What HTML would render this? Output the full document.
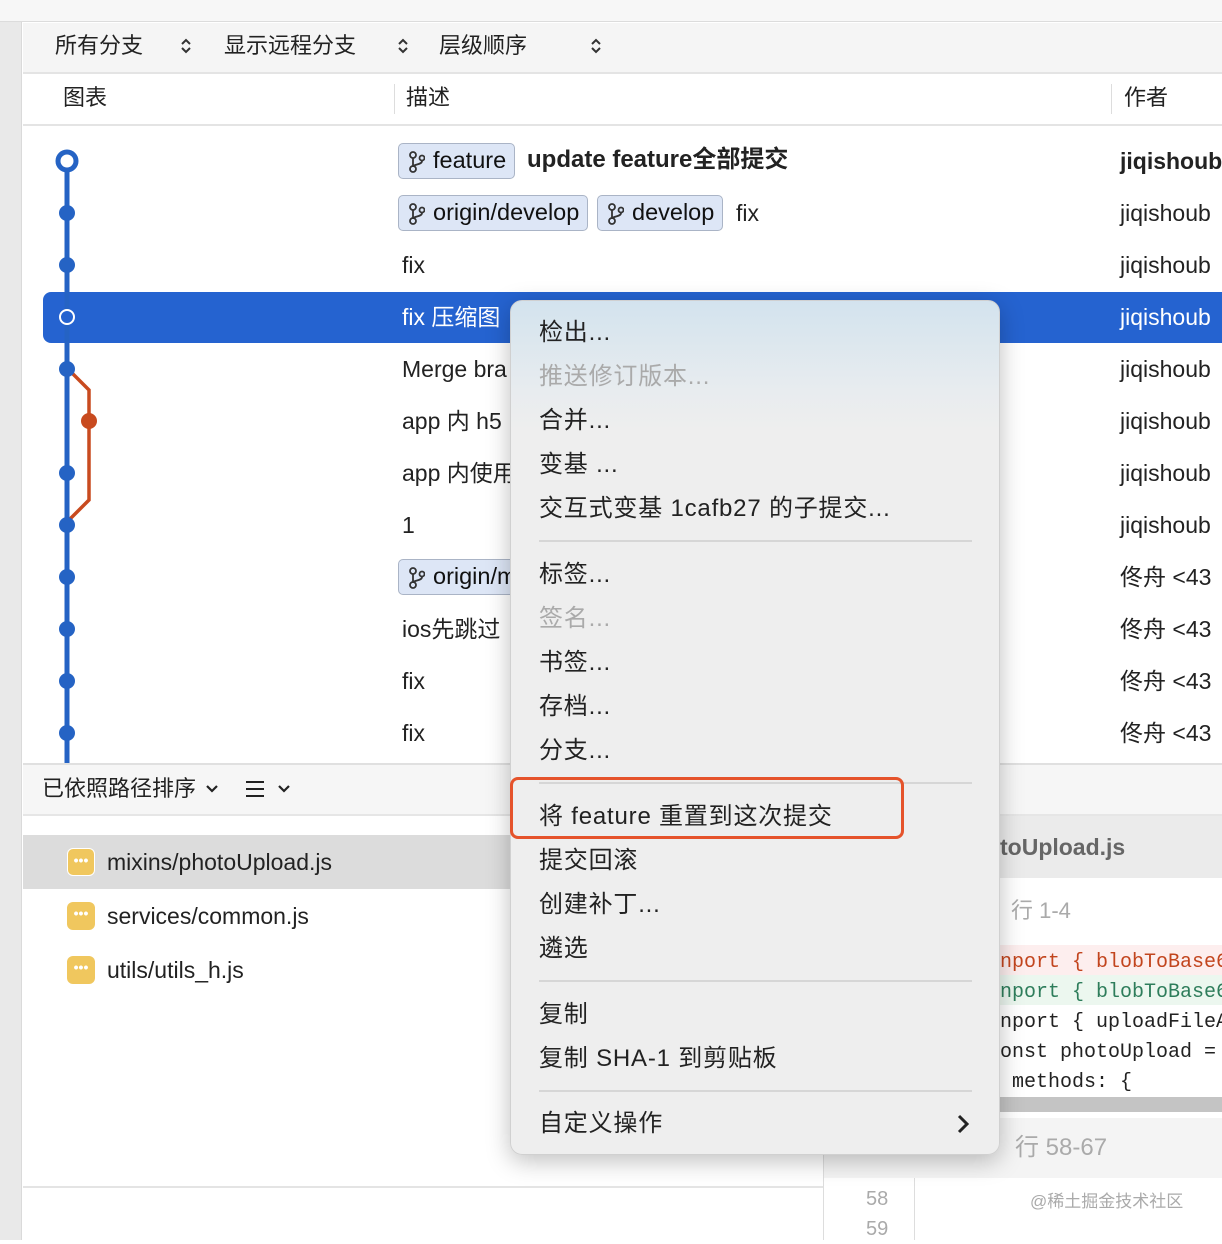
<!DOCTYPE html>
<html><head><meta charset="utf-8"><style>
*{margin:0;padding:0;box-sizing:border-box}
body{width:1222px;height:1240px;overflow:hidden;background:#fff;font-family:"Liberation Sans","Noto Sans CJK SC",sans-serif;color:#222;position:relative}
.a{position:absolute;white-space:nowrap}
.t{font-size:22px;line-height:30px}
.r{font-size:23px;line-height:30px}
.tag{position:absolute;height:36px;border:1.5px solid #aab4c6;background:#dde6f6;border-radius:5px;font-size:23.5px;line-height:33px;padding:0 8px 0 34px;color:#111}
.tag svg{position:absolute;left:10px;top:7px}
.mi{position:absolute;left:539px;font-size:24px;line-height:34px;color:#222;white-space:nowrap;letter-spacing:0.8px}
.dis{color:#aaa}
.sep{position:absolute;left:539px;width:433px;height:2px;background:#d6d6d6}
.fi{position:absolute;left:67px;width:28px;height:28px;border-radius:6px;background:#f0c75e;color:#fff;font-size:14px;line-height:22px;text-align:center;font-weight:bold}
.code{position:absolute;left:1000px;font-family:"Liberation Mono",monospace;font-size:20px;line-height:30px;white-space:pre;width:222px;overflow:hidden}
</style></head><body>
<div class="a" style="left:0;top:0;width:1222px;height:22px;background:#f7f7f7;border-bottom:1px solid #dcdcdc"></div>
<div class="a" style="left:0;top:22px;width:22px;height:1218px;background:#e9e9e9;border-right:1px solid #dadada"></div>
<div class="a" style="left:23px;top:23px;width:1199px;height:51px;background:#f5f5f5;border-bottom:2px solid #e4e4e4"></div>
<div class="a t" style="left:55px;top:31px">所有分支</div>
<svg class="a" style="left:180px;top:37px" width="12" height="18"><path d="M2 7l4-4 4 4M2 11l4 4 4-4" fill="none" stroke="#333" stroke-width="2"/></svg>
<div class="a t" style="left:224px;top:31px">显示远程分支</div>
<svg class="a" style="left:397px;top:37px" width="12" height="18"><path d="M2 7l4-4 4 4M2 11l4 4 4-4" fill="none" stroke="#333" stroke-width="2"/></svg>
<div class="a t" style="left:439px;top:31px">层级顺序</div>
<svg class="a" style="left:590px;top:37px" width="12" height="18"><path d="M2 7l4-4 4 4M2 11l4 4 4-4" fill="none" stroke="#333" stroke-width="2"/></svg>
<div class="a" style="left:23px;top:124px;width:1199px;height:2px;background:#e4e4e4"></div>
<div class="a t" style="left:63px;top:83px">图表</div>
<div class="a" style="left:394px;top:84px;width:1px;height:30px;background:#ddd"></div>
<div class="a t" style="left:406px;top:83px">描述</div>
<div class="a" style="left:1111px;top:84px;width:1px;height:30px;background:#ddd"></div>
<div class="a t" style="left:1124px;top:83px">作者</div>
<div class="a" style="left:43px;top:292px;width:1179px;height:51px;background:#2563d0;border-radius:8px 0 0 8px"></div>
<svg class="a" style="left:0;top:130px" width="120" height="640">
<path d="M67 31V640" stroke="#2563c4" stroke-width="5"/>
<path d="M69 240L89 260V370L69 390" fill="none" stroke="#c84a1f" stroke-width="3.5"/>
<circle cx="67" cy="31" r="9" fill="#fff" stroke="#2563c4" stroke-width="5"/>
<circle cx="67" cy="83" r="8" fill="#2563c4"/><circle cx="67" cy="135" r="8" fill="#2563c4"/>
<circle cx="67" cy="187" r="7" fill="#2563d0" stroke="#fff" stroke-width="2"/>
<circle cx="67" cy="239" r="8" fill="#2563c4"/><circle cx="89" cy="291" r="8" fill="#c84a1f"/>
<circle cx="67" cy="343" r="8" fill="#2563c4"/><circle cx="67" cy="395" r="8" fill="#2563c4"/>
<circle cx="67" cy="447" r="8" fill="#2563c4"/><circle cx="67" cy="499" r="8" fill="#2563c4"/>
<circle cx="67" cy="551" r="8" fill="#2563c4"/><circle cx="67" cy="603" r="8" fill="#2563c4"/>
</svg>
<div class="tag" style="left:398px;top:143px"><svg width="16" height="22"><circle cx="4" cy="4" r="3" fill="none" stroke="#333" stroke-width="1.8"/><circle cx="4" cy="18" r="3" fill="none" stroke="#333" stroke-width="1.8"/><circle cx="13" cy="7" r="2.5" fill="none" stroke="#333" stroke-width="1.8"/><path d="M4 7v8M13 10c0 4-9 3-9 6" fill="none" stroke="#333" stroke-width="1.8"/></svg>feature</div>
<div class="a" style="left:527px;top:145px;font-size:24px;font-weight:bold;line-height:30px">update feature全部提交</div>
<div class="tag" style="left:398px;top:195px"><svg width="16" height="22"><circle cx="4" cy="4" r="3" fill="none" stroke="#333" stroke-width="1.8"/><circle cx="4" cy="18" r="3" fill="none" stroke="#333" stroke-width="1.8"/><circle cx="13" cy="7" r="2.5" fill="none" stroke="#333" stroke-width="1.8"/><path d="M4 7v8M13 10c0 4-9 3-9 6" fill="none" stroke="#333" stroke-width="1.8"/></svg>origin/develop</div>
<div class="tag" style="left:597px;top:195px"><svg width="16" height="22"><circle cx="4" cy="4" r="3" fill="none" stroke="#333" stroke-width="1.8"/><circle cx="4" cy="18" r="3" fill="none" stroke="#333" stroke-width="1.8"/><circle cx="13" cy="7" r="2.5" fill="none" stroke="#333" stroke-width="1.8"/><path d="M4 7v8M13 10c0 4-9 3-9 6" fill="none" stroke="#333" stroke-width="1.8"/></svg>develop</div>
<div class="a r" style="left:736px;top:198px">fix</div>
<div class="a r" style="left:402px;top:250px">fix</div>
<div class="a r" style="left:402px;top:302px;color:#fff">fix 压缩图</div>
<div class="a r" style="left:402px;top:354px">Merge bra</div>
<div class="a r" style="left:402px;top:406px">app 内 h5</div>
<div class="a r" style="left:402px;top:458px">app 内使用</div>
<div class="a r" style="left:402px;top:510px">1</div>
<div class="tag" style="left:398px;top:559px;width:140px"><svg width="16" height="22"><circle cx="4" cy="4" r="3" fill="none" stroke="#333" stroke-width="1.8"/><circle cx="4" cy="18" r="3" fill="none" stroke="#333" stroke-width="1.8"/><circle cx="13" cy="7" r="2.5" fill="none" stroke="#333" stroke-width="1.8"/><path d="M4 7v8M13 10c0 4-9 3-9 6" fill="none" stroke="#333" stroke-width="1.8"/></svg>origin/m</div>
<div class="a r" style="left:402px;top:614px">ios先跳过</div>
<div class="a r" style="left:402px;top:666px">fix</div>
<div class="a r" style="left:402px;top:718px">fix</div>
<div class="a r" style="left:1120px;top:146px;font-weight:bold">jiqishoub</div>
<div class="a r" style="left:1120px;top:198px">jiqishoub</div>
<div class="a r" style="left:1120px;top:250px">jiqishoub</div>
<div class="a r" style="left:1120px;top:302px;color:#fff">jiqishoub</div>
<div class="a r" style="left:1120px;top:354px">jiqishoub</div>
<div class="a r" style="left:1120px;top:406px">jiqishoub</div>
<div class="a r" style="left:1120px;top:458px">jiqishoub</div>
<div class="a r" style="left:1120px;top:510px">jiqishoub</div>
<div class="a r" style="left:1120px;top:562px">佟舟 &lt;43</div>
<div class="a r" style="left:1120px;top:614px">佟舟 &lt;43</div>
<div class="a r" style="left:1120px;top:666px">佟舟 &lt;43</div>
<div class="a r" style="left:1120px;top:718px">佟舟 &lt;43</div>
<div class="a" style="left:23px;top:763px;width:1199px;height:2px;background:#e0e0e0"></div>
<div class="a" style="left:23px;top:765px;width:1199px;height:51px;background:#f6f6f6;border-bottom:2px solid #e6e6e6"></div>
<div class="a t" style="left:42px;top:774px">已依照路径排序</div>
<svg class="a" style="left:205px;top:784px" width="14" height="10"><path d="M2 2l5 5 5-5" fill="none" stroke="#222" stroke-width="2.2"/></svg>
<svg class="a" style="left:245px;top:779px" width="20" height="20"><path d="M1 3h18M1 10h18M1 17h18" stroke="#222" stroke-width="2"/></svg>
<svg class="a" style="left:277px;top:784px" width="14" height="10"><path d="M2 2l5 5 5-5" fill="none" stroke="#222" stroke-width="2.2"/></svg>
<div class="a" style="left:23px;top:835px;width:800px;height:54px;background:#dcdcdc"></div>
<div class="fi" style="top:848px;border:1.5px solid #fff">•••</div>
<div class="a r" style="left:107px;top:847px">mixins/photoUpload.js</div>
<div class="fi" style="top:902px">•••</div>
<div class="a r" style="left:107px;top:901px">services/common.js</div>
<div class="fi" style="top:956px">•••</div>
<div class="a r" style="left:107px;top:955px">utils/utils_h.js</div>
<div class="a" style="left:23px;top:1186px;width:801px;height:2px;background:#e4e4e4"></div>
<div class="a" style="left:823px;top:816px;width:1px;height:424px;background:#ddd"></div>
<div class="a" style="left:824px;top:816px;width:398px;height:62px;background:#ebebeb"></div>
<div class="a" style="left:1000px;top:834px;font-size:23px;font-weight:bold;color:#666">toUpload.js</div>
<div class="a t" style="left:1011px;top:896px;color:#aaa">行 1-4</div>
<div class="a" style="left:1000px;top:945px;width:222px;height:30px;background:#fdeeee"></div>
<div class="a" style="left:1000px;top:975px;width:222px;height:30px;background:#ecf7ef"></div>
<div class="code" style="top:948px;color:#c2451e">nport { blobToBase64</div>
<div class="code" style="top:978px;color:#2e7d5b">nport { blobToBase64</div>
<div class="code" style="top:1008px">nport { uploadFileA</div>
<div class="code" style="top:1038px">onst photoUpload = </div>
<div class="code" style="top:1068px"> methods: {</div>
<div class="a" style="left:1000px;top:1097px;width:222px;height:15px;background:#c4c4c4"></div>
<div class="a" style="left:824px;top:1118px;width:398px;height:60px;background:#f4f4f4"></div>
<div class="a t" style="left:1015px;top:1133px;color:#aaa;font-size:24px">行 58-67</div>
<div class="a" style="left:914px;top:1178px;width:1px;height:62px;background:#ddd"></div>
<div class="a" style="left:866px;top:1184px;font-size:20px;color:#aaa;line-height:30px">58<br>59</div>
<div class="a" style="left:1030px;top:1187px;font-size:17px;color:#aaa">@稀土掘金技术社区</div>
<div class="a" style="left:510px;top:300px;width:490px;height:855px;border-radius:12px;background:linear-gradient(#d3e3ee 0,#e8ecef 90px,#eeeeee 130px,#eeeeee);box-shadow:0 6px 24px rgba(0,0,0,.25);border:1px solid #d0d0d0"></div>
<div class="mi" style="top:316px">检出...</div>
<div class="mi dis" style="top:360px">推送修订版本...</div>
<div class="mi" style="top:404px">合并...</div>
<div class="mi" style="top:448px">变基 ...</div>
<div class="mi" style="top:492px">交互式变基 1cafb27 的子提交...</div>
<div class="sep" style="top:540px"></div>
<div class="mi" style="top:558px">标签...</div>
<div class="mi dis" style="top:602px">签名...</div>
<div class="mi" style="top:646px">书签...</div>
<div class="mi" style="top:690px">存档...</div>
<div class="mi" style="top:734px">分支...</div>
<div class="sep" style="top:782px"></div>
<div class="mi" style="top:800px">将 feature 重置到这次提交</div>
<div class="mi" style="top:844px">提交回滚</div>
<div class="mi" style="top:888px">创建补丁...</div>
<div class="mi" style="top:932px">遴选</div>
<div class="sep" style="top:980px"></div>
<div class="mi" style="top:998px">复制</div>
<div class="mi" style="top:1042px">复制 SHA-1 到剪贴板</div>
<div class="sep" style="top:1090px"></div>
<div class="mi" style="top:1107px">自定义操作</div>
<svg class="a" style="left:956px;top:1114px" width="14" height="20"><path d="M3 2l8 8-8 8" fill="none" stroke="#222" stroke-width="3"/></svg>
<div class="a" style="left:510px;top:777px;width:394px;height:62px;border:3.5px solid #e5532b;border-radius:8px"></div>
</body></html>
